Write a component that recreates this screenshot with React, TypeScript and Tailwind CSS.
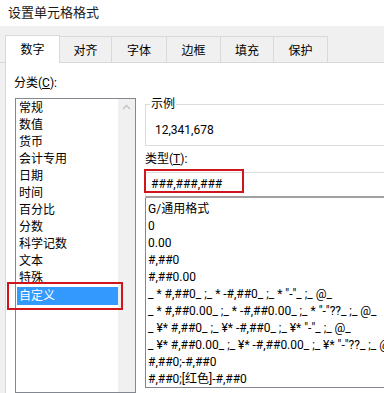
import React from "react";

const categories = ["常规", "数值", "货币", "会计专用", "日期", "时间", "百分比", "分数", "科学记数", "文本", "特殊", "自定义"];

const types = [
  "G/通用格式",
  "0",
  "0.00",
  "#,##0",
  "#,##0.00",
  '_ * #,##0_ ;_ * -#,##0_ ;_ * "-"_ ;_ @_ ',
  '_ * #,##0.00_ ;_ * -#,##0.00_ ;_ * "-"??_ ;_ @_ ',
  '_ ¥* #,##0_ ;_ ¥* -#,##0_ ;_ ¥* "-"_ ;_ @_ ',
  '_ ¥* #,##0.00_ ;_ ¥* -#,##0.00_ ;_ ¥* "-"??_ ;_ @_ ',
  "#,##0;-#,##0",
  "#,##0;[红色]-#,##0",
];

const tabs = [
  { label: "对齐", w: "w-[52px]" },
  { label: "字体", w: "w-[55px]" },
  { label: "边框", w: "w-[54px]" },
  { label: "填充", w: "w-[53px]" },
  { label: "保护", w: "w-[54px]" },
];

export default function App() {
  return (
    <div className="relative w-[384px] h-[393px] overflow-hidden bg-[#f0f0f0] text-[12px] text-[#000] font-['Roboto','Noto_Sans_CJK_SC',sans-serif]">
      {/* title bar */}
      <div className="h-[26px] bg-white pl-[8px] text-[13px] leading-[26px] text-[#1a1a1a]">设置单元格格式</div>

      {/* tabs */}
      <div className="flex items-end pt-[9px] pl-[5px] border-b border-[#d9d9d9] h-[37px]">
        <div className="w-[55px] h-[28px] bg-white border border-b-0 border-[#d9d9d9] flex items-center justify-center relative z-10 translate-y-px">
          数字
        </div>
        {tabs.map((t) => (
          <div
            key={t.label}
            className={`${t.w} h-[26px] border-t border-r border-[#d9d9d9] flex items-center justify-center pt-[2px]`}
          >
            {t.label}
          </div>
        ))}
      </div>

      {/* panel */}
      <div className="ml-[5px] h-[330px] bg-white border-l border-[#d9d9d9] flex">
        {/* left column */}
        <div className="pl-[8px] w-[130px] shrink-0 flex flex-col">
          <div className="pt-[12px] h-[29px] leading-[17px]">
            分类(<span className="underline">C</span>):
          </div>
          <div className="ml-px mt-[6px] flex-1 border border-[#828790] flex">
            <div className="flex-1 pt-px pl-px">
              {categories.map((c) => (
                <div
                  key={c}
                  className={`h-[17px] leading-[17px] pl-[2px] ${c === "自定义" ? "bg-[#3399ff] text-white h-[18px] leading-[18px]" : ""}`}
                >
                  {c}
                </div>
              ))}
            </div>
            <div className="w-[17px] bg-[#f0f0f0] flex justify-center pt-[4px]">
              <svg width="9" height="6" viewBox="0 0 9 6" className="mt-[1px]">
                <path d="M1 5 L4.5 1.5 L8 5" fill="none" stroke="#c2c2c2" strokeWidth="1.3" />
              </svg>
            </div>
          </div>
        </div>

        {/* right column */}
        <div className="ml-[9px] w-[260px] shrink-0 flex flex-col">
          {/* sample group */}
          <div className="mt-[41px] h-[42px] border border-[#dcdcdc] relative">
            <span className="absolute -top-[9px] left-[4px] bg-white px-px leading-[17px]">示例</span>
            <div className="pl-[9px] pt-[17px] leading-[17px]">12,341,678</div>
          </div>
          <div className="mt-[5px] leading-[17px]">
            类型(<span className="underline">T</span>):
          </div>
          <div className="mt-[4px] h-[26px] border-t border-x border-[#dcdcdc] border-b-2 border-b-[#a0a0a0] pl-[5px] leading-[22px]">
            ###,###,###
          </div>
          <div className="h-[190px] border-x border-b border-[#828790] pt-[3px] pl-[2px]">
            {types.map((t) => (
              <div key={t} className="h-[17px] leading-[17px] whitespace-pre">
                {t}
              </div>
            ))}
          </div>
        </div>
      </div>

      {/* red highlight annotations */}
      <div className="absolute left-[7px] top-[282px] w-[116px] h-[28px] border-2 border-[#d0161d]" />
      <div className="absolute left-[144px] top-[169px] w-[100px] h-[24px] border-2 border-[#d0161d]" />
    </div>
  );
}
